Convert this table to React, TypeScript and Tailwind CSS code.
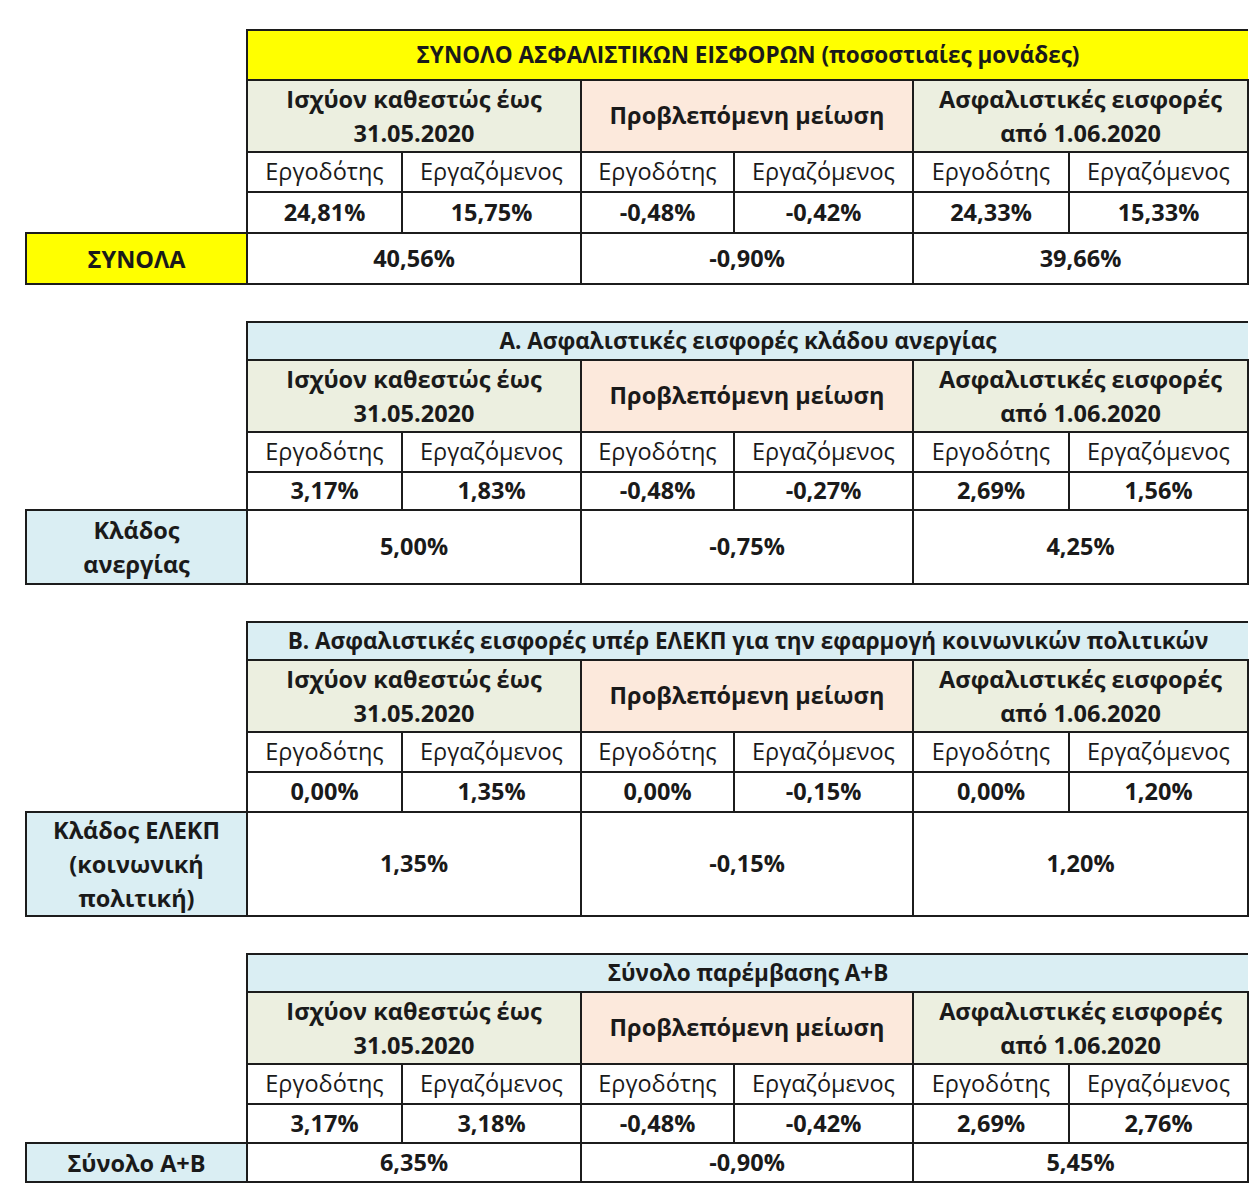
import React from 'react';

interface Block {
  title: string;
  titleBg: string;
  titleH: string;
  values: string[];
  totals: string[];
  label: React.ReactNode;
  labelBg: string;
  totalH: string;
  valuesH: string;
}

const blocks: Block[] = [
  {
    title: 'ΣΥΝΟΛΟ ΑΣΦΑΛΙΣΤΙΚΩΝ ΕΙΣΦΟΡΩΝ (ποσοστιαίες μονάδες)',
    titleBg: 'bg-[#ffff00]',
    titleH: 'h-[50px]',
    values: ['24,81%', '15,75%', '-0,48%', '-0,42%', '24,33%', '15,33%'],
    totals: ['40,56%', '-0,90%', '39,66%'],
    label: 'ΣΥΝΟΛΑ',
    labelBg: 'bg-[#ffff00]',
    totalH: 'h-[51px]',
    valuesH: 'h-[41px]',
  },
  {
    title: 'Α. Ασφαλιστικές εισφορές κλάδου ανεργίας',
    titleBg: 'bg-[#daeef3]',
    titleH: 'h-[38px]',
    values: ['3,17%', '1,83%', '-0,48%', '-0,27%', '2,69%', '1,56%'],
    totals: ['5,00%', '-0,75%', '4,25%'],
    label: (
      <>
        Κλάδος
        <br />
        ανεργίας
      </>
    ),
    labelBg: 'bg-[#daeef3]',
    totalH: 'h-[74px]',
    valuesH: 'h-[38px]',
  },
  {
    title: 'Β. Ασφαλιστικές εισφορές υπέρ ΕΛΕΚΠ για την εφαρμογή κοινωνικών πολιτικών',
    titleBg: 'bg-[#daeef3]',
    titleH: 'h-[38px]',
    values: ['0,00%', '1,35%', '0,00%', '-0,15%', '0,00%', '1,20%'],
    totals: ['1,35%', '-0,15%', '1,20%'],
    label: (
      <>
        Κλάδος ΕΛΕΚΠ
        <br />
        (κοινωνική
        <br />
        πολιτική)
      </>
    ),
    labelBg: 'bg-[#daeef3]',
    totalH: 'h-[100px]',
    valuesH: 'h-[40px]',
  },
  {
    title: 'Σύνολο παρέμβασης Α+Β',
    titleBg: 'bg-[#daeef3]',
    titleH: 'h-[38px]',
    values: ['3,17%', '3,18%', '-0,48%', '-0,42%', '2,69%', '2,76%'],
    totals: ['6,35%', '-0,90%', '5,45%'],
    label: 'Σύνολο Α+Β',
    labelBg: 'bg-[#daeef3]',
    totalH: 'h-[39px]',
    valuesH: 'h-[39px]',
  },
];

const cell = 'border-2 border-[#1c1c1c] text-center align-middle p-0';

const ContributionTable = ({ block }: { block: Block }) => (
  <table className="border-collapse table-fixed w-[1222px]">
    <colgroup>
      <col className="w-[221px]" />
      <col className="w-[155px]" />
      <col className="w-[179px]" />
      <col className="w-[153px]" />
      <col className="w-[179px]" />
      <col className="w-[156px]" />
      <col className="w-[179px]" />
    </colgroup>
    <tbody>
      <tr className={block.titleH}>
        <td className="p-0" />
        <td
          colSpan={6}
          className={`${block.titleBg} border-2 border-r-0 border-[#1c1c1c] text-center align-middle p-0 font-bold text-[22.5px] whitespace-nowrap`}
        >
          {block.title}
        </td>
      </tr>
      <tr className="h-[72px]">
        <td className="p-0" />
        <td colSpan={2} className={`${cell} bg-[#ecefe0] font-bold leading-[34px]`}>
          Ισχύον καθεστώς έως
          <br />
          31.05.2020
        </td>
        <td colSpan={2} className={`${cell} bg-[#fce9dc] font-bold`}>
          Προβλεπόμενη μείωση
        </td>
        <td colSpan={2} className={`${cell} bg-[#ecefe0] font-bold leading-[34px]`}>
          Ασφαλιστικές εισφορές
          <br />
          από 1.06.2020
        </td>
      </tr>
      <tr className="h-[40px]">
        <td className="p-0" />
        {['Εργοδότης', 'Εργαζόμενος', 'Εργοδότης', 'Εργαζόμενος', 'Εργοδότης', 'Εργαζόμενος'].map((t, i) => (
          <td key={i} className={`${cell} whitespace-nowrap`}>
            {t}
          </td>
        ))}
      </tr>
      <tr className={block.valuesH}>
        <td className="p-0" />
        {block.values.map((v, i) => (
          <td key={i} className={`${cell} font-bold`}>
            {v}
          </td>
        ))}
      </tr>
      <tr className={block.totalH}>
        <td className={`${cell} ${block.labelBg} font-bold leading-[34px]`}>{block.label}</td>
        {block.totals.map((v, i) => (
          <td key={i} colSpan={2} className={`${cell} font-bold`}>
            {v}
          </td>
        ))}
      </tr>
    </tbody>
  </table>
);

export default function App() {
  return (
    <div className="w-[1260px] h-[1195px] bg-white text-[#1a1a1a] text-[23.5px] font-['Open_Sans',sans-serif]">
      <div className="flex flex-col gap-[36px] pl-[25px] pt-[29px]">
        {blocks.map((b, i) => (
          <ContributionTable key={i} block={b} />
        ))}
      </div>
    </div>
  );
}
